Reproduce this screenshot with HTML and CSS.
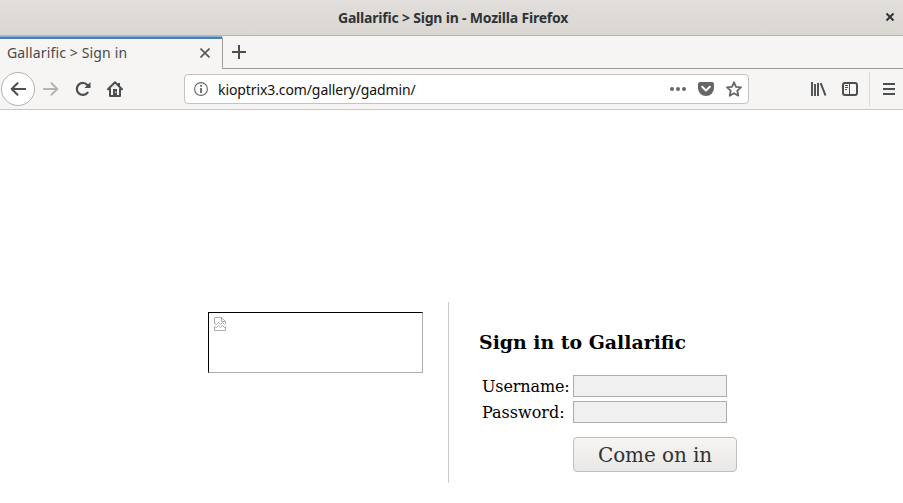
FILE: index.html
```html
<!DOCTYPE html>
<html lang="en">
<head>
<meta charset="utf-8">
<title>Gallarific &gt; Sign in</title>
<link rel="stylesheet" href="styles.css">
</head>
<body>
<header class="titlebar">
  <span class="window-title">Gallarific &gt; Sign in - Mozilla Firefox</span>
  <svg class="window-close" width="10" height="10" viewBox="0 0 10 10"><path d="M1.5 1.5l7 7M8.5 1.5l-7 7" stroke="#2e3436" stroke-width="2"/></svg>
</header>
<div class="tabstrip">
  <div class="tab">
    <span class="tab-label">Gallarific &gt; Sign in</span>
    <svg width="10" height="10" viewBox="0 0 10 10"><path d="M.5.5l9 9M9.5.5l-9 9" stroke="#555759" stroke-width="1.6"/></svg>
  </div>
  <div class="newtab"><svg width="14" height="14" viewBox="0 0 14 14"><path d="M7 0v14M0 7h14" stroke="#4c4e50" stroke-width="2"/></svg></div>
</div>
<nav class="toolbar">
  <span class="back"><svg width="16" height="16" viewBox="0 0 16 16"><path d="M15.3 8H2M7.5 2.2L1.7 8l5.800 5.800" fill="none" stroke="#4c4e50" stroke-width="2" stroke-linecap="round" stroke-linejoin="round"/></svg></span>
  <svg class="forward" width="16" height="16" viewBox="0 0 16 16"><path d="M.7 8H14M8.500 2.200L14.300 8l-5.800 5.800" fill="none" stroke="#b5b5b4" stroke-width="2" stroke-linecap="round" stroke-linejoin="round"/></svg>
  <svg class="reload" width="16" height="16" viewBox="0 0 16 16"><path d="M12.600 11.600A6 6 0 1 1 12.500 4.200" fill="none" stroke="#4c4e50" stroke-width="2.200" stroke-linecap="round"/><path d="M15.500 1v6h-6z" fill="#4c4e50"/></svg>
  <svg class="home" width="16" height="16" viewBox="0 0 16 16"><path d="M1 8.300L8 1.300l7 7M3 8v7h10V8" fill="none" stroke="#4c4e50" stroke-width="2" stroke-linecap="round" stroke-linejoin="round"/><path d="M11 2h2v4h-2zM6 8h4v7H6z" fill="#4c4e50"/><path d="M8.200 10.500h1v1.500h-1z" fill="#f6f5f4"/></svg>
  <div class="urlbar">
    <svg width="14" height="14" viewBox="0 0 14 14"><circle cx="7" cy="7" r="6.400" fill="none" stroke="#666" stroke-width="1.100"/><path d="M6.100 3h1.800v1.800H6.100zM6.100 6h1.800v5H6.100z" fill="#666"/></svg>
    <span class="url">kioptrix3.com/gallery/gadmin/</span>
    <svg class="dots" width="16" height="16" viewBox="0 0 16 16"><g fill="#666"><circle cx="2" cy="8" r="2"/><circle cx="8" cy="8" r="2"/><circle cx="14" cy="8" r="2"/></g></svg>
    <svg class="pocket" width="16" height="16" viewBox="0 0 16 16"><path d="M2 1h12q2 0 2 2v4a8 8 0 0 1-16 0V3q0-2 2-2z" fill="#666"/><path d="M4.200 5.800L8 9.500l3.800-3.700" fill="none" stroke="#fff" stroke-width="2" stroke-linecap="round" stroke-linejoin="round"/></svg>
    <svg class="star" width="16" height="16" viewBox="0 0 16 16"><path d="M8 1.300l2 4.500 5 .5-3.700 3.400 1 5L8 12.200l-4.300 2.500 1-5L1 6.300l5-.5z" fill="none" stroke="#666" stroke-width="1.800" stroke-linejoin="round"/></svg>
  </div>
  <svg class="library" width="16" height="16" viewBox="0 0 16 16"><path d="M1 1v14M4 3v12M7 2v13" stroke="#4c4e50" stroke-width="1.900"/><path d="M9.700 2.200L14.500 14.500" stroke="#4c4e50" stroke-width="2"/></svg>
  <svg class="sidebar" width="16" height="16" viewBox="0 0 16 16"><rect x="1" y="2" width="14" height="12" rx="2" fill="none" stroke="#4c4e50" stroke-width="2"/><path d="M7.500 2v12" stroke="#4c4e50"/><path d="M3 4.500h3M3 6.500h3M3 8.500h2" stroke="#4c4e50"/></svg>
  <span class="separator"></span>
  <svg class="menu" width="12" height="12" viewBox="0 0 12 12"><path d="M0 1h12M0 6h12M0 11h12" stroke="#4c4e50" stroke-width="2"/></svg>
</nav>
<main class="page">
  <div class="logo"><svg width="12" height="14" viewBox="0 0 12 14"><path d="M.5 7V.5h7l4 4V7M7.500.5v4h4M.5 6.500l2 1 2-2 2 2 2-2 2 2 1-1M.5 9.500l2 1 2-2 2 2 2-2 2 2 1-1M.5 10v3.500h11V10" fill="none" stroke="#adadad"/></svg></div>
  <form class="login">
    <h3>Sign in to Gallarific</h3>
    <div class="fields">
      <label class="user" for="u">Username:</label><input id="u" type="text">
      <label for="p">Password:</label><input id="p" type="password">
      <button type="button">Come on in</button>
    </div>
  </form>
</main>
</body>
</html>
```
FILE: styles.css
```css
* { box-sizing: border-box; }
body { margin: 0; height: 503px; overflow: hidden; background: #fff; font-family: "Noto Sans", sans-serif; color: #2e3436; }
svg { display: block; flex: none; }
.titlebar { display: flex; align-items: center; height: 36px; padding: 0 8px 0 338px; background: linear-gradient(#e1dedb, #dad6d2); border-bottom: 1px solid #b8b3ae; }
.window-title { flex: 1; font-size: 14px; font-weight: 700; letter-spacing: -.2px; white-space: nowrap; }
.window-close { margin-top: -2px; }
.tabstrip { display: flex; height: 33px; background: #f6f5f4; }
.tab { display: flex; align-items: center; justify-content: space-between; width: 223px; padding: 0 12px 2px 7px; background: linear-gradient(#8fb0d6 1px, #4a7db8 1px, #4a7db8 3px, #f6f5f4 3px) border-box; border-top: 3px solid transparent; border-right: 1px solid #9c9c9b; }
.tab-label { margin-bottom: 2px; font-size: 14px; letter-spacing: .14px; color: #46494b; white-space: nowrap; }
.newtab { flex: 1; padding: 9px; border-bottom: 1px solid #9c9c9b; }
.toolbar { display: flex; align-items: center; height: 41px; padding-left: 1px; background: #f6f5f4; border-bottom: 1px solid #c9c8c7; }
.back { display: flex; align-items: center; justify-content: center; width: 34px; height: 34px; border: 1px solid #b3b2b1; border-radius: 50%; background: #fff; }
.forward { margin-left: 8px; }
.reload, .home { margin-left: 16px; }
.urlbar { display: flex; align-items: center; width: 565px; height: 30px; margin-left: 61px; padding: 0 6px 0 9px; background: #fff; border: 1px solid #c4c3c2; border-radius: 4px; }
.url { flex: 1; margin-left: 10px; font-size: 14px; letter-spacing: -.1px; color: #111; }
.pocket, .star { margin-left: 12px; }
.library { margin-left: 62px; }
.sidebar { margin-left: 15px; }
.separator { width: 1px; height: 34px; margin-left: 11px; background: #d9d8d7; }
.menu { margin-left: 13px; }
.page { display: flex; align-items: flex-start; padding: 192px 0 0 208px; color: #000; font-family: "DejaVu Serif", serif; font-size: 16px; }
.logo { width: 215px; height: 61px; margin: 10px 25px 0 0; padding: 4px 5px; border: 1px solid; border-color: #000 #adadad #adadad #000; }
.login { height: 181px; padding: 29px 0 0 30px; border-left: 1px solid #ccc; }
h3 { margin: 0; font-size: 18.9px; line-height: 22px; }
.fields { display: grid; grid-template-columns: 87px 164px; grid-template-rows: 22px 22px; gap: 4px; margin: 22px 0 0 3px; }
label { line-height: 24px; height: 22px; }
.user { letter-spacing: -.13px; }
input { width: 154px; height: 22px; border: 1px solid #adadad; background: #f0f0f0; padding: 0 2px; }
button { grid-column: 2; height: 35px; margin-top: 10px; padding: 0; border: 1px solid #c0bfbd; border-radius: 4px; background: linear-gradient(#f6f5f4, #e9e8e6); color: #2e3436; font: 20px "DejaVu Serif", serif; letter-spacing: -.1px; }
```
